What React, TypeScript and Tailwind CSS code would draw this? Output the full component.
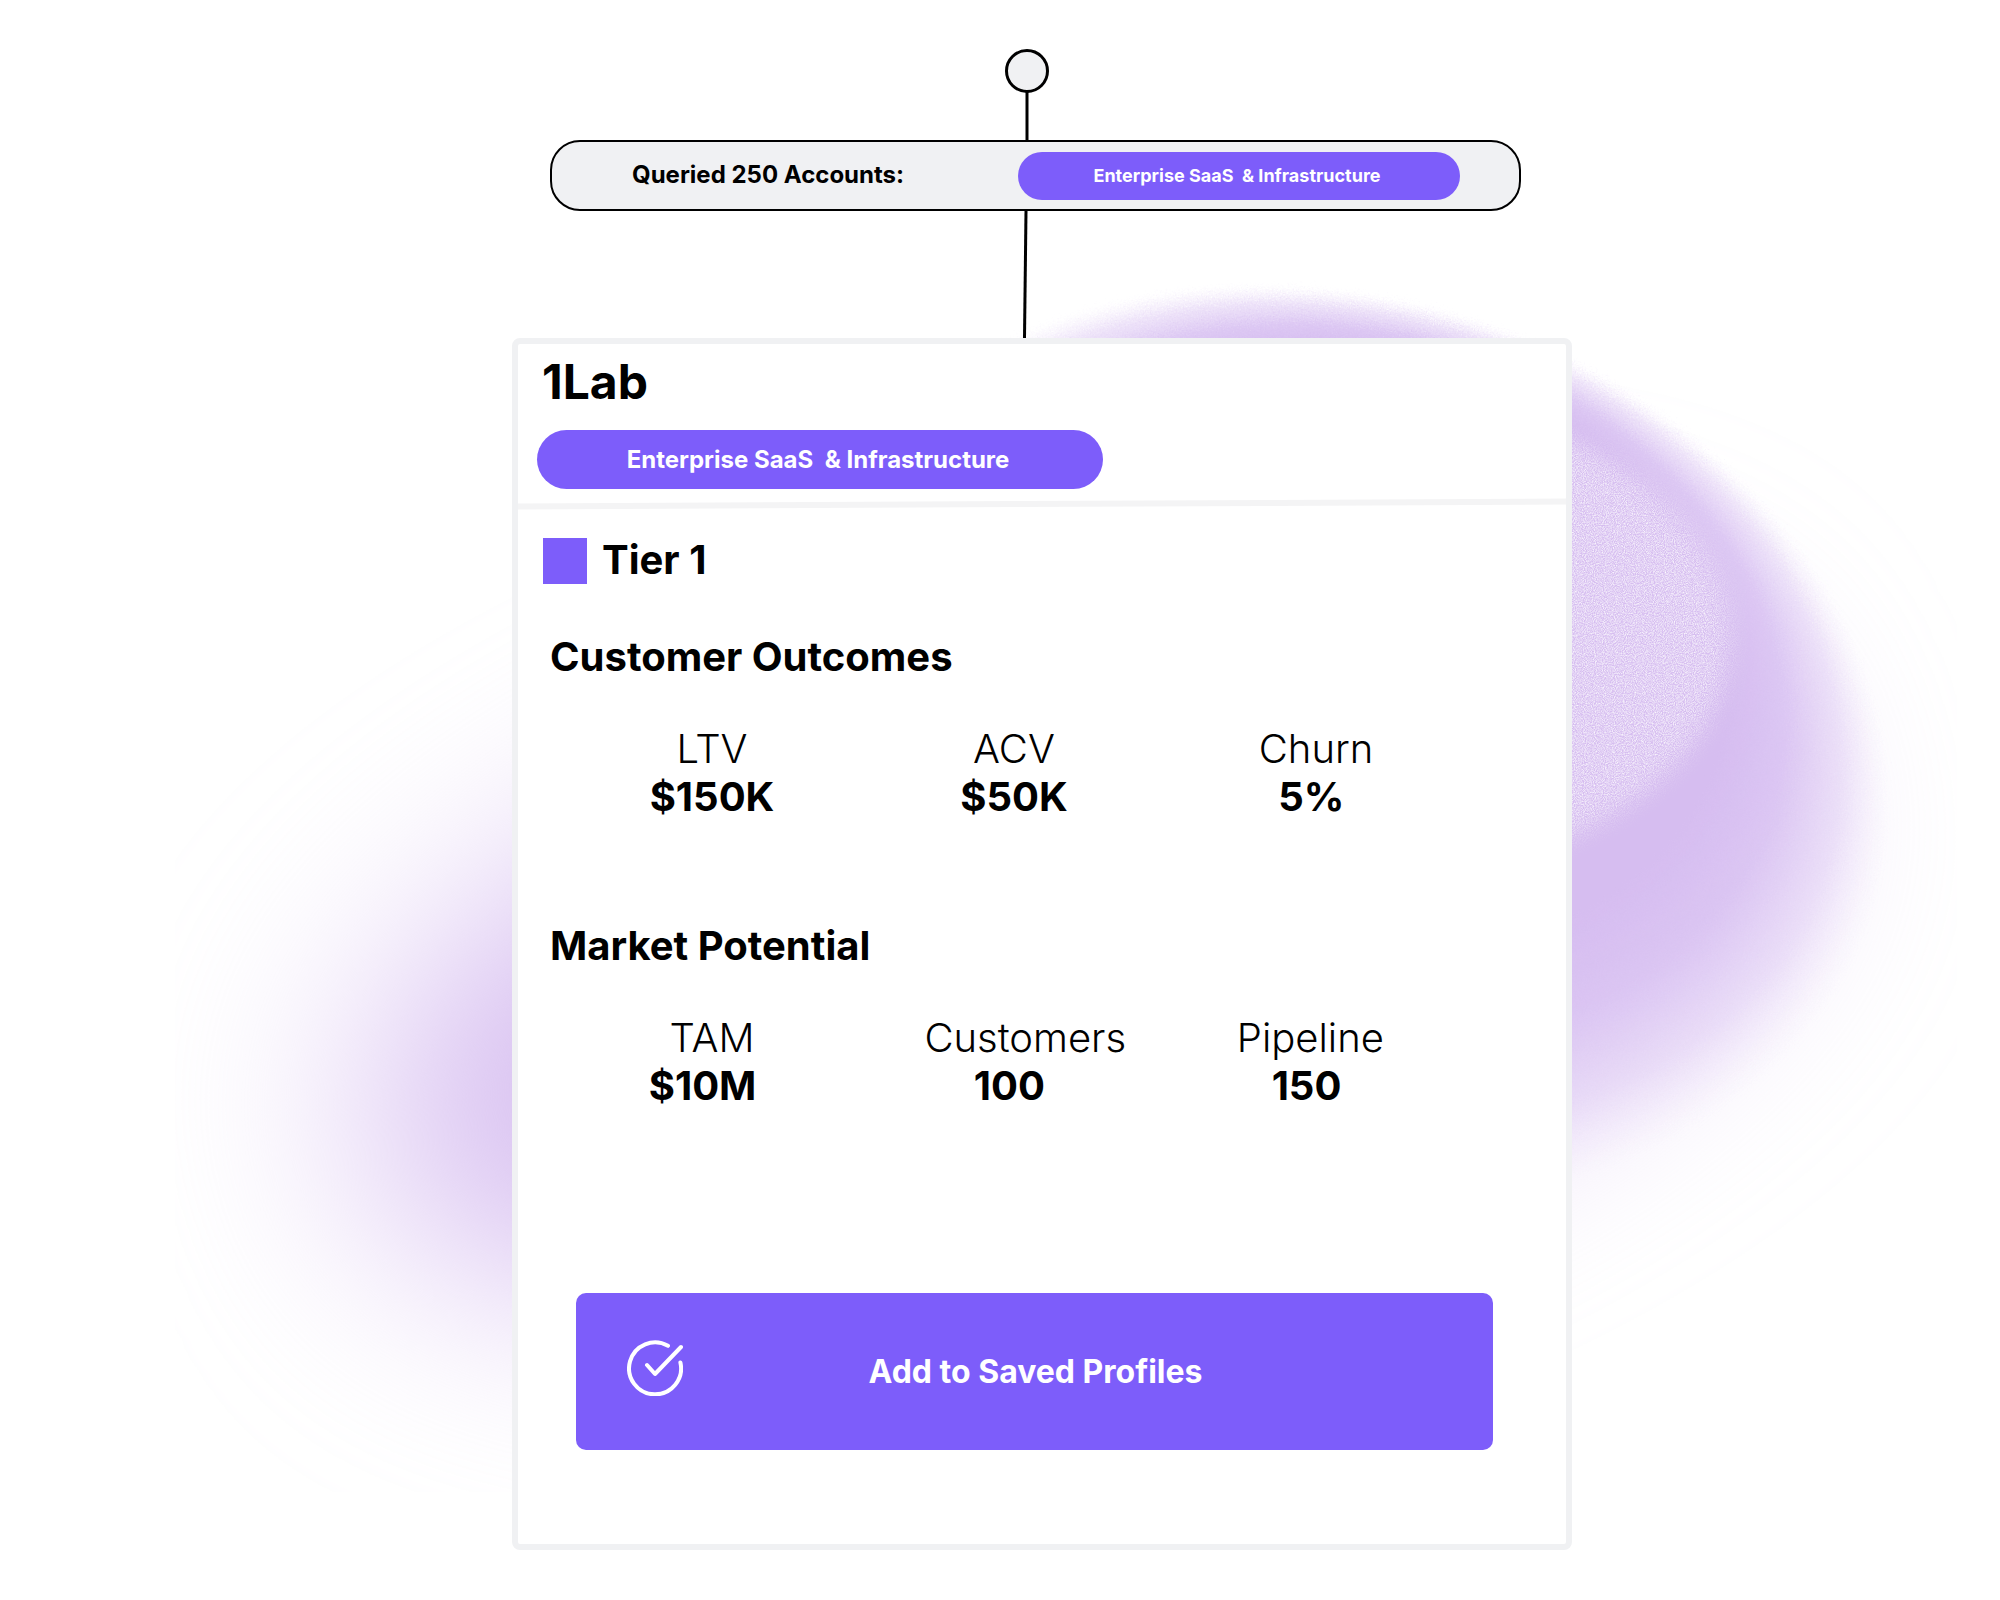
import React from "react";

type Stat = { label: string; value: string };

const outcomes: Stat[] = [
  { label: "LTV", value: "$150K" },
  { label: "ACV", value: "$50K" },
  { label: "Churn", value: "5% " },
];

const potential: Stat[] = [
  { label: "TAM", value: "$10M  " },
  { label: "  Customers", value: "100 " },
  { label: "Pipeline ", value: "150  " },
];

function Glow() {
  return (
    <svg
      aria-hidden="true"
      className="pointer-events-none absolute inset-0 -z-10 h-full w-full"
      viewBox="0 0 2000 1600"
      preserveAspectRatio="xMidYMid slice"
    >
      <defs>
        <clipPath id="frame">
          <rect x="175" y="280" width="1782" height="1212" />
        </clipPath>
        <filter id="soft" x="-60%" y="-140%" width="220%" height="380%" colorInterpolationFilters="sRGB">
          <feGaussianBlur stdDeviation="108" />
        </filter>
        <radialGradient id="orb" cx="0.5" cy="0.5" r="0.5" fx="0.5" fy="0.17">
          <stop offset="0.66" stopColor="#d6bdf0" />
          <stop offset="0.78" stopColor="#d9c2f2" stopOpacity="0.9" />
          <stop offset="0.9" stopColor="#e0cdf4" stopOpacity="0.55" />
          <stop offset="1" stopColor="#ecdff8" stopOpacity="0" />
        </radialGradient>
        <filter id="rough" x="-5%" y="-5%" width="110%" height="110%" colorInterpolationFilters="sRGB">
          <feTurbulence type="fractalNoise" baseFrequency="0.8" numOctaves="3" seed="4" result="n" />
          <feDisplacementMap in="SourceGraphic" in2="n" scale="26" xChannelSelector="R" yChannelSelector="G" />
        </filter>
        <filter id="grain" x="-10%" y="-10%" width="120%" height="120%" colorInterpolationFilters="sRGB">
          <feGaussianBlur in="SourceGraphic" stdDeviation="12" result="b" />
          <feTurbulence type="fractalNoise" baseFrequency="0.9" numOctaves="3" seed="9" />
          <feColorMatrix values="0 0 0 0 1  0 0 0 0 1  0 0 0 0 1  1.5 0 0 0 -0.44" />
          <feComposite operator="in" in2="b" />
        </filter>
      </defs>
      <g clipPath="url(#frame)">
        <ellipse
          cx="1060"
          cy="965"
          rx="720"
          ry="285"
          fill="#d6bdf0"
          filter="url(#soft)"
          transform="rotate(-15 1060 965)"
        />
        <ellipse
          cx="1333"
          cy="743"
          rx="565"
          ry="446"
          fill="url(#orb)"
          filter="url(#rough)"
          transform="rotate(17 1333 743)"
        />
        <ellipse cx="1350" cy="638" rx="380" ry="244" fill="#fff" filter="url(#grain)" />
      </g>
    </svg>
  );
}

function CheckIcon() {
  return (
    <svg
      aria-hidden="true"
      className="mb-2 h-14 w-14 shrink-0"
      viewBox="0 0 56 56"
      fill="none"
      stroke="#fff"
      strokeWidth="4"
      strokeLinecap="round"
      strokeLinejoin="round"
    >
      <path d="M41 5.8A26 26 0 1 0 53.4 22.5" />
      <path d="M20 25l8 9L54 7" />
    </svg>
  );
}

function StatRow({ items }: { items: Stat[] }) {
  return (
    <dl className="mt-11 mr-[99px] ml-[43px] grid grid-cols-3 text-[40px] leading-[48px]">
      {items.map((s) => (
        <div key={s.label} className="flex flex-col items-center whitespace-pre">
          <dt className="font-light">{s.label}</dt>
          <dd className="font-bold">{s.value}</dd>
        </div>
      ))}
    </dl>
  );
}

export default function App() {
  return (
    <main className="relative isolate flex min-h-screen flex-col items-center overflow-hidden bg-white pt-[49px] pb-[50px] pl-[84px] font-['Inter',sans-serif] text-black">
      <Glow />
      <div className="w-full max-w-[1060px]">
        <div className="flex justify-center pr-[31px]">
          <svg aria-hidden="true" className="h-[91px] w-11" viewBox="0 0 44 91">
            <path d="M22 43V91" stroke="#000" strokeWidth="3" />
            <circle cx="22" cy="22" r="20.5" fill="#f0f1f3" stroke="#000" strokeWidth="3" />
          </svg>
        </div>

        <div className="mr-[51px] ml-[38px] flex h-[71px] items-center justify-between rounded-[30px] border-2 border-black bg-[#f0f1f3] pr-[59px] pl-20">
          <p className="pb-0.5 text-2xl font-bold">Queried 250 Accounts:</p>
          <span className="flex h-12 w-[442px] items-center justify-center rounded-full bg-[#7d5dfa] pr-1 text-lg font-bold whitespace-pre text-white">
            Enterprise SaaS{"  "}&amp; Infrastructure
          </span>
        </div>

        <div className="flex justify-center pr-[35px]">
          <svg aria-hidden="true" className="h-[127px] w-2" viewBox="0 0 8 127">
            <path d="M5 0L3.5 127" stroke="#000" strokeWidth="3" />
          </svg>
        </div>

        <section className="rounded-lg border-[6px] border-[#f0f1f3] bg-white pt-2 pb-[94px]">
          <h1 className="ml-6 text-5xl leading-[60px] font-bold">1Lab</h1>
          <span className="mt-[18px] ml-[19px] flex h-[59px] w-[566px] items-center justify-center rounded-full bg-[#7d5dfa] pr-1 text-2xl font-bold whitespace-pre text-white">
            Enterprise SaaS{"  "}&amp; Infrastructure
          </span>
          <svg aria-hidden="true" className="mt-[9px] h-3 w-full" viewBox="0 0 1048 12" preserveAspectRatio="none">
            <path d="M0 8.5L1048 3.5" stroke="#f4f4f5" strokeWidth="6" />
          </svg>

          <div className="mt-7 ml-[25px] flex items-start gap-[15px]">
            <span className="h-[46px] w-11 bg-[#7d5dfa]" />
            <p className="text-[40px] leading-[44px] font-bold">Tier 1</p>
          </div>

          <h2 className="mt-[49px] ml-8 text-[40px] leading-[48px] font-bold">Customer Outcomes</h2>
          <StatRow items={outcomes} />

          <h2 className="mt-[101px] ml-8 text-[40px] leading-[48px] font-bold">Market Potential</h2>
          <StatRow items={potential} />

          <div className="mt-[183px] mr-[73px] ml-[58px]">
            <button
              type="button"
              className="flex h-[157px] w-full items-center rounded-[10px] bg-[#7d5dfa] pr-[51px] pl-[51px] text-[32px] font-bold text-white"
            >
              <CheckIcon />
              <span className="flex-1 pr-[54px] text-center">Add to Saved Profiles</span>
            </button>
          </div>
        </section>
      </div>
    </main>
  );
}
